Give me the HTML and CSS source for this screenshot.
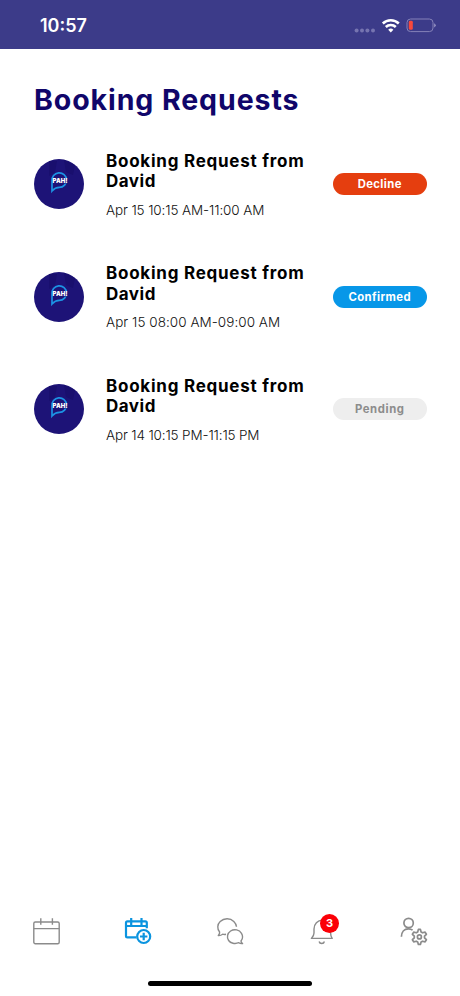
FILE: index.html
```html
<!DOCTYPE html>
<html lang="en">
  <head>
    <meta charset="utf-8">
    <title>Booking Requests</title>
    <link rel="stylesheet" href="styles.css">
  </head>
  <body>
    <header class="status-bar">
      <span class="time">10:57</span>
      <svg class="status-icons" width="84" height="20" viewBox="0 0 84 20">
        <g fill="#7674b0">
          <circle cx="4.6" cy="14.4" r="2"/>
          <circle cx="10" cy="14.4" r="2"/>
          <circle cx="15.4" cy="14.4" r="2"/>
          <circle cx="21" cy="14.4" r="2"/>
        </g>
        <g fill="none" stroke="#fff" stroke-width="2.5">
          <path d="M30.8 7.5a11.4 11.4 0 0 1 16 0"/>
          <path d="M33.8 11a7.1 7.1 0 0 1 10 0"/>
        </g>
        <path d="M38.8 16.4l-2.6-2.7a3.7 3.7 0 0 1 5.2 0z" fill="#fff"/>
        <rect x="55" y="3" width="26" height="12.6" rx="3.6" fill="none" stroke="#8582b8"/>
        <rect x="56.8" y="4.8" width="4" height="9" rx="1.4" fill="#f8483c"/>
        <path d="M82.2 7.2q3 2 0 4.4z" fill="#9895c5"/>
      </svg>
    </header>

    <main>
      <h1>Booking Requests</h1>
      <ul class="requests">
        <li class="request">
          <div class="avatar">
            <svg viewBox="0 0 50 50">
              <path class="shade" d="M15 2h8l-2 11-6 4zM30 1l11 5-2 10-7-3z"/>
              <path class="bubble" d="M18 32V22a7.3 7.3 0 1 1 7.3 6.400c-3 0-5 1-7.300 3.600z"/>
              <path class="gap" d="M30 19.500h4v5h-4z"/>
            </svg>
            <span>PAH!</span>
          </div>
          <div class="info">
            <h2>Booking Request from<br><span class="name">David</span></h2>
            <p class="first">Apr 15 10:15 AM-11:00 AM</p>
          </div>
          <span class="status decline">Decline</span>
        </li>
        <li class="request">
          <div class="avatar">
            <svg viewBox="0 0 50 50">
              <path class="shade" d="M15 2h8l-2 11-6 4zM30 1l11 5-2 10-7-3z"/>
              <path class="bubble" d="M18 32V22a7.3 7.3 0 1 1 7.3 6.400c-3 0-5 1-7.300 3.600z"/>
              <path class="gap" d="M30 19.500h4v5h-4z"/>
            </svg>
            <span>PAH!</span>
          </div>
          <div class="info">
            <h2>Booking Request from<br><span class="name">David</span></h2>
            <p class="second">Apr 15 08:00 AM-09:00 AM</p>
          </div>
          <span class="status confirmed">Confirmed</span>
        </li>
        <li class="request">
          <div class="avatar">
            <svg viewBox="0 0 50 50">
              <path class="shade" d="M15 2h8l-2 11-6 4zM30 1l11 5-2 10-7-3z"/>
              <path class="bubble" d="M18 32V22a7.3 7.3 0 1 1 7.3 6.400c-3 0-5 1-7.300 3.600z"/>
              <path class="gap" d="M30 19.500h4v5h-4z"/>
            </svg>
            <span>PAH!</span>
          </div>
          <div class="info">
            <h2>Booking Request from<br><span class="name">David</span></h2>
            <p class="third">Apr 14 10:15 PM-11:15 PM</p>
          </div>
          <span class="status pending">Pending</span>
        </li>
      </ul>
    </main>

    <nav class="tabs">
      <a class="tab">
        <svg viewBox="0 0 32 32">
          <rect x="3.8" y="7" width="25.4" height="21.8" rx="1.5"/>
          <path d="M3.8 13.6h25.4M10.8 3.2v6.6M22.4 3.2v6.6"/>
        </svg>
      </a>
      <a class="tab active">
        <svg viewBox="0 0 32 32">
          <path d="M14.5 22.4H5.4a1.4 1.4 0 0 1-1.4-1.4V7.8a1.4 1.4 0 0 1 1.4-1.4h18a1.4 1.4 0 0 1 1.4 1.4v5.4M4 11h20.8M9.2 3v7.5M19.5 3v7.5"/>
          <circle cx="21.7" cy="21.5" r="6.5"/>
          <path d="M21.7 17.8v7.4M18 21.5h7.4"/>
        </svg>
      </a>
      <a class="tab">
        <svg viewBox="0 0 32 32">
          <path d="M12 19.300c-1.300.3-2.300.2-3.300-.1-1.400 1-2.900 1.500-4.400 1.300 1-1 1.500-2.300 1.300-3.500C3 14.200 3.200 9.400 6.200 6.600c3.800-3.700 10-3.700 13.600-.1 1.700 1.700 2.700 3.300 2.700 5.300"/>
          <path d="M28.6 28.6c-1.500.2-2.800-.1-3.800-.9-3.800 1.600-8.300.6-10.200-2.200-2.200-3.200-1.100-7.500 2-9.500 3.800-2.400 8.800-1.200 10.900 2.300 1.600 2.700 1.200 5.600-.5 7.700 0 1.100.5 1.900 1.600 2.600z"/>
        </svg>
      </a>
      <a class="tab">
        <svg viewBox="0 0 32 32">
          <path d="M5.400 23.400h20.800c-1.200-1.700-1.600-3.300-1.600-5.400v-4c0-5.200-3.600-8.800-8.300-8.800S8 8.800 8 14v4c0 2.100-.9 3.700-2.600 5.400zM13.100 26.500c.6 2.700 4.700 2.700 5.300 0"/>
        </svg>
        <span class="badge">3</span>
      </a>
      <a class="tab">
        <svg class="user" viewBox="0 0 32 32">
          <circle cx="10.600" cy="8" r="4.700"/>
          <path d="M3.400 21.800c0-4.800 2.800-8 7-8 1.800 0 3 .4 4.200 1.400"/>
          <path d="M20.400 14.400h2l.7 2.600 1.400.8 2.600-.7 1.300 2.200-1.900 1.900v1.600l1.900 1.900-1.300 2.200-2.600-.7-1.400.8-.7 2.400h-2l-.7-2.400-1.400-.8-2.600.7-1.300-2.200 1.900-1.900v-1.600l-1.900-1.900 1.300-2.200 2.600.7 1.400-.8z"/>
          <circle cx="21.400" cy="21.900" r="2"/>
        </svg>
      </a>
    </nav>
    <div class="home-bar"></div>
  </body>
</html>
```

FILE: styles.css
```css
* {
  box-sizing: border-box;
}

body {
  margin: 0;
  height: 996px;
  display: flex;
  flex-direction: column;
  background-color: #fff;
  font-family: Inter, sans-serif;
  overflow: hidden;
}

.status-bar {
  height: 49px;
  padding: 2px 24px 0 40px;
  display: flex;
  justify-content: space-between;
  align-items: center;
  background-color: #3c3b89;
}

.time {
  color: #fff;
  font-size: 18px;
  font-weight: 600;
}

.status-icons {
  display: block;
}

main {
  flex: 1;
  padding: 34px 33.5px 0;
}

h1 {
  margin: 0;
  padding-left: 0.5px;
  font-size: 28.5px;
  line-height: 34px;
  font-weight: 700;
  letter-spacing: 0.92px;
  white-space: nowrap;
  color: #10066a;
}

.requests {
  margin: 11px 0 0;
  padding: 0;
  list-style: none;
}

.request {
  height: 112.6px;
  display: flex;
  align-items: center;
}

.avatar {
  position: relative;
  width: 50px;
  height: 50px;
  flex-shrink: 0;
  border-radius: 50%;
  background-color: #1d1377;
}

.avatar svg {
  display: block;
}

.avatar span {
  position: absolute;
  top: 18px;
  left: 19px;
  color: #fff;
  font-size: 6px;
  line-height: 8px;
  font-weight: 900;
}

.shade {
  fill: #190f6e;
}

.bubble {
  fill: none;
  stroke: #1c94e4;
  stroke-width: 1.7;
}

.gap {
  fill: #1d1377;
}

.info {
  flex: 1;
  padding-left: 22.5px;
  white-space: nowrap;
}

h2 {
  margin: 1px 0 0;
  font-size: 17px;
  line-height: 20.6px;
  font-weight: 700;
  letter-spacing: 0.75px;
}

.name {
  letter-spacing: 0.5px;
}

.info p {
  margin: 9px 0 0;
  font-size: 13.5px;
  line-height: 18px;
  color: #111;
  font-weight: 350;
}

.first {
  letter-spacing: -0.12px;
}

.second {
  letter-spacing: 0.04px;
}

.third {
  letter-spacing: -0.15px;
}

.status {
  width: 93.5px;
  height: 22px;
  border-radius: 11px;
  font-size: 11.3px;
  line-height: 22px;
  font-weight: 700;
  text-align: center;
  letter-spacing: 0.4px;
}

.decline {
  background-color: #e53e0f;
  color: #fff;
}

.confirmed {
  background-color: #0797e8;
  color: #fff;
}

.pending {
  background-color: #eee;
  color: #8c8c8c;
  letter-spacing: 0.6px;
}

.tabs {
  height: 66px;
  display: grid;
  grid-template-columns: repeat(5, 1fr);
  justify-items: center;
}

.tab {
  position: relative;
  width: 32px;
  height: 32px;
}

.tab svg {
  display: block;
  width: 32px;
  height: 32px;
  fill: none;
  stroke: #8b8b8b;
  stroke-width: 1.4;
  stroke-linejoin: round;
}

.tab .user {
  stroke-width: 1.7;
}

.tab.active svg {
  stroke: #0b94df;
  stroke-width: 2.2;
}

.badge {
  position: absolute;
  top: -1.5px;
  left: 14px;
  width: 19px;
  height: 19px;
  border-radius: 50%;
  background-color: #fb0007;
  color: #fff;
  font-size: 11px;
  line-height: 19px;
  font-weight: 700;
  text-align: center;
}

.home-bar {
  width: 164px;
  height: 5px;
  margin: 0 auto 10px;
  border-radius: 3px;
  background-color: #000;
}
```
